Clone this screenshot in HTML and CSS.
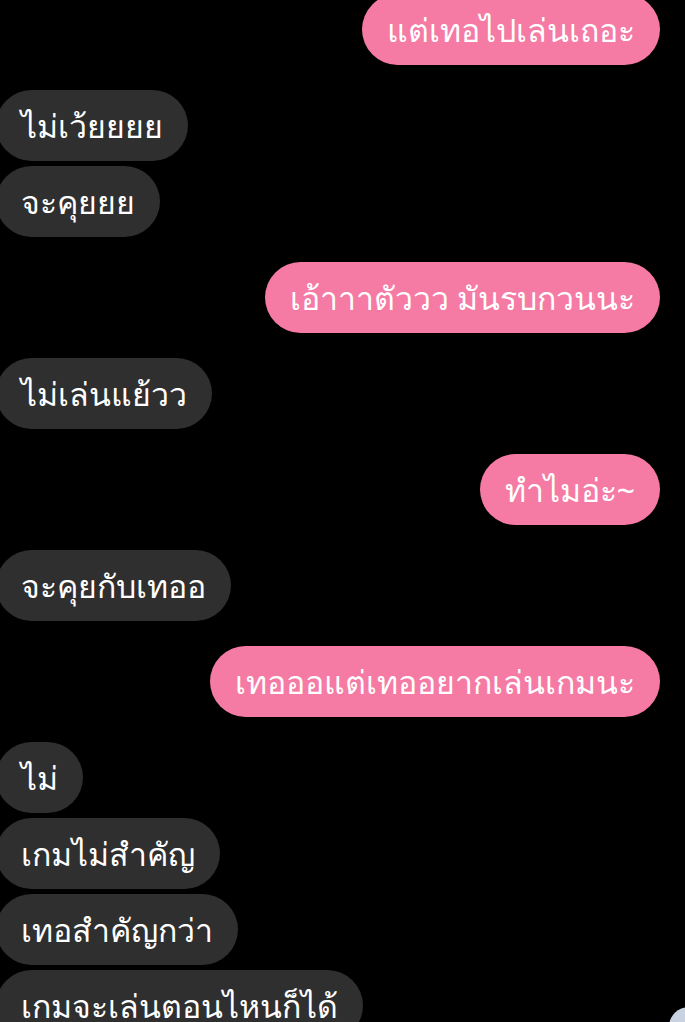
FILE: index.html
```html
<!DOCTYPE html>
<html>

<head>
    <title>Chat</title>
    <link rel="stylesheet" href="styles.css">
</head>

<body>
    <div class="chat">
        <div class="group me">
            <div class="bubble">แต่เทอไปเล่นเถอะ</div>
        </div>
        <div class="group them">
            <div class="bubble">ไม่เว้ยยยย</div>
            <div class="bubble">จะคุยยย</div>
        </div>
        <div class="group me">
            <div class="bubble">เอ้าาาตัววว มันรบกวนนะ</div>
        </div>
        <div class="group them">
            <div class="bubble">ไม่เล่นแย้วว</div>
        </div>
        <div class="group me">
            <div class="bubble">ทำไมอ่ะ~</div>
        </div>
        <div class="group them">
            <div class="bubble">จะคุยกับเทออ</div>
        </div>
        <div class="group me">
            <div class="bubble">เทอออแต่เทออยากเล่นเกมนะ</div>
        </div>
        <div class="group them">
            <div class="bubble">ไม่</div>
            <div class="bubble">เกมไม่สำคัญ</div>
            <div class="bubble">เทอสำคัญกว่า</div>
            <div class="bubble">เกมจะเล่นตอนไหนก็ได้</div>
        </div>
    </div>

    <!-- read receipt avatar peeking in at the corner -->
    <div class="seen"></div>
</body>

</html>
```

FILE: styles.css
```css
body {
    font-family: "Noto Sans", "DejaVu Sans", sans-serif;
    margin: 0;
    padding: 0;
    background: #000000;
    color: #ffffff;
    height: 1022px;
    overflow: hidden;
    position: relative;
}

.chat {
    display: flex;
    flex-direction: column;
    gap: 25px;
    margin-top: -6px;
    padding-right: 25px;
}

.group {
    display: flex;
    flex-direction: column;
    gap: 5px;
}

.me {
    align-items: flex-end;
}

.them {
    align-items: flex-start;
    margin-left: -4px;
}

.bubble {
    height: 71px;
    line-height: 71px;
    padding: 0 25px;
    border-radius: 36px;
    font-size: 32px;
    white-space: nowrap;
}

.me .bubble {
    background: #f57ba5;
}

.them .bubble {
    background: #2f2f2f;
}

.seen {
    position: absolute;
    left: 669px;
    top: 1007px;
    width: 40px;
    height: 40px;
    border-radius: 50%;
    background: #c9d2e0;
}
```
